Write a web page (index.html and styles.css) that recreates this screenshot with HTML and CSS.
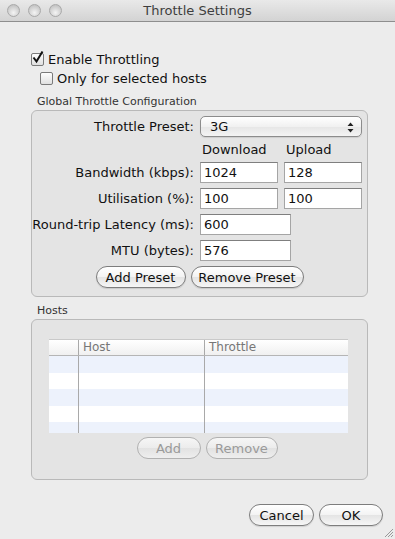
FILE: index.html
```html
<!DOCTYPE html>
<html>
<head>
<meta charset="utf-8">
<link rel="stylesheet" href="styles.css">
</head>
<body>
<div class="window">
  <div class="titlebar">
    <div class="lights"><span class="light"></span><span class="light"></span><span class="light"></span></div>
    <div class="title">Throttle Settings</div>
  </div>
  <div class="content">
    <label class="check check-main"><span class="box checked"><svg width="13" height="13" viewBox="0 0 13 13"><path d="M2.5 6.5 L5.5 10.5 L11.5 0.5" fill="none" stroke="#111" stroke-width="2"/></svg></span>Enable Throttling</label>
    <label class="check check-sub"><span class="box"></span>Only for selected hosts</label>

    <div class="group-title">Global Throttle Configuration</div>
    <div class="group group-config">
      <div class="row row-preset">
        <span class="lbl">Throttle Preset:</span>
        <div class="select"><span>3G</span><svg class="arrows" width="7" height="11" viewBox="0 0 7 11"><path d="M3.5 0.5 L6.5 4 L0.5 4 Z M3.5 10.5 L6.5 7 L0.5 7 Z" fill="#222"/></svg></div>
      </div>
      <div class="row row-head">
        <span class="lbl"></span>
        <span class="colhead">Download</span>
        <span class="colhead">Upload</span>
      </div>
      <div class="row">
        <span class="lbl">Bandwidth (kbps):</span>
        <div class="input">1024</div>
        <div class="input">128</div>
      </div>
      <div class="row">
        <span class="lbl">Utilisation (%):</span>
        <div class="input">100</div>
        <div class="input">100</div>
      </div>
      <div class="row">
        <span class="lbl">Round-trip Latency (ms):</span>
        <div class="input wide">600</div>
      </div>
      <div class="row">
        <span class="lbl">MTU (bytes):</span>
        <div class="input wide">576</div>
      </div>
      <div class="btnrow btnrow-preset">
        <button class="btn btn-addpreset">Add Preset</button>
        <button class="btn btn-rmpreset">Remove Preset</button>
      </div>
    </div>

    <div class="group-title hosts-title">Hosts</div>
    <div class="group group-hosts">
      <div class="table">
        <div class="trow thead"><span class="c0"></span><span class="c1">Host</span><span class="c2">Throttle</span></div>
        <div class="trow odd"><span class="c0"></span><span class="c1"></span><span class="c2"></span></div>
        <div class="trow"><span class="c0"></span><span class="c1"></span><span class="c2"></span></div>
        <div class="trow odd"><span class="c0"></span><span class="c1"></span><span class="c2"></span></div>
        <div class="trow"><span class="c0"></span><span class="c1"></span><span class="c2"></span></div>
        <div class="trow odd last"><span class="c0"></span><span class="c1"></span><span class="c2"></span></div>
      </div>
      <div class="btnrow btnrow-hosts">
        <button class="btn disabled btn-add">Add</button>
        <button class="btn disabled btn-remove">Remove</button>
      </div>
    </div>

    <div class="footer">
      <button class="btn btn-cancel">Cancel</button>
      <button class="btn btn-ok">OK</button>
    </div>
  </div>
  <svg class="grip" width="11" height="11" viewBox="0 0 11 11"><path d="M10 2 L2 10 M10 5 L5 10 M10 8 L8 10" stroke="#999" stroke-width="1"/></svg>
</div>
</body>
</html>
```

FILE: styles.css
```css
* { box-sizing: border-box; }
html, body { margin: 0; padding: 0; }
body {
  width: 395px;
  height: 539px;
  overflow: hidden;
  background: #ececec;
  font-family: "DejaVu Sans", "Liberation Sans", sans-serif;
  font-size: 12px;
  color: #111;
}
.window { position: relative; width: 395px; height: 539px; background: #ececec; }
.titlebar {
  height: 22px;
  background: linear-gradient(#e9e9e9, #d3d3d3);
  border-bottom: 1px solid #8e8e8e;
  display: flex;
  align-items: center;
  position: relative;
}
.lights { display: flex; gap: 8px; padding-left: 7px; }
.light {
  width: 13px; height: 13px; border-radius: 50%;
  border: 1px solid #a9a9a9;
  background: radial-gradient(circle at 50% 70%, #f4f4f4, #c9c9c9 70%, #b6b6b6);
}
.title {
  position: absolute; left: 0; right: 0; top: 0; bottom: 0;
  display: flex; align-items: center; justify-content: center;
  font-size: 13px; color: #3e3e3e;
}
.content { padding: 0 0 0 31px; }
.check { display: flex; align-items: center; gap: 4px; font-size: 13px; height: 16px; }
.check-main { margin-top: 29px; padding-left: 0; }
.check-sub { margin-top: 3px; padding-left: 9px; }
.box {
  width: 13px; height: 13px;
  border: 1px solid #7a7a7a;
  border-radius: 2px;
  background: linear-gradient(#fdfdfd, #e0e0e0);
  position: relative;
  flex: none;
}
.box svg { position: absolute; left: -1px; top: -3px; }
.group-title { font-size: 11px; color: #333; margin: 9px 0 0 6px; height: 13px; }
.group {
  width: 337px;
  border: 1px solid #b9b9b9;
  border-radius: 6px;
  background: #e4e4e4;
  margin-top: 2px;
}
.group-config { height: 187px; padding-top: 5px; }
.row { display: flex; align-items: center; gap: 6px; height: 21px; margin-bottom: 5px; }
.lbl { width: 162px; text-align: right; font-size: 13px; flex: none; }
.row-preset { height: 21px; margin-bottom: 4px; }
.row-head { height: 16px; margin-bottom: 5px; }
.colhead { width: 78px; font-size: 13px; padding-left: 2px; }
.select {
  width: 162px; height: 21px;
  border: 1px solid #8c8c8c;
  border-radius: 5px;
  background: linear-gradient(#ffffff, #f1f1f1 50%, #e6e6e6 51%, #f4f4f4);
  display: flex; align-items: center; justify-content: space-between;
  padding: 0 7px 0 9px;
  font-size: 13px;
  box-shadow: 0 1px 1px rgba(0,0,0,0.1);
}
.arrows { margin-top: 1px; }
.input {
  width: 78px; height: 21px;
  background: #fff;
  border: 1px solid #a5a5a5;
  border-top-color: #7f7f7f;
  font-size: 13px;
  padding: 2px 0 0 3px;
  line-height: 16px;
}
.input.wide { width: 91px; }
.btnrow { display: flex; justify-content: center; gap: 5px; }
.btnrow-preset { padding-left: 0; margin-top: 1px; }
.btn {
  font-family: "DejaVu Sans", "Liberation Sans", sans-serif;
  font-size: 13px;
  height: 22px;
  border: 1px solid #7d7d7d;
  border-radius: 11px;
  background: linear-gradient(#ffffff, #f3f3f3 50%, #e4e4e4 51%, #f6f6f6);
  color: #111;
  padding: 0;
  box-shadow: 0 1px 1px rgba(0,0,0,0.12);
}
.btn-addpreset { width: 90px; }
.btn-rmpreset { width: 113px; }
.btn.disabled { color: #9a9a9a; border-color: #b1b1b1; background: linear-gradient(#f6f6f6, #ececec 50%, #e2e2e2 51%, #eeeeee); box-shadow: none; }
.btn-add { width: 64px; }
.btn-remove { width: 72px; }
.hosts-title { margin-top: 7px; }
.group-hosts { height: 161px; padding: 19px 0 0 17px; }
.table { width: 299px; height: 94px; border-top: 1px solid #c9c9c9; background: #fff; overflow: hidden; }
.trow { display: flex; height: 16.5px; }
.trow.odd { background: #edf2fc; }
.trow span { display: block; flex: none; }
.c0 { width: 29px; }
.c1 { width: 126px; border-left: 1px solid #a9a9a9; }
.c2 { flex: 1 !important; border-left: 1px solid #a9a9a9; }
.thead { height: 16px; background: linear-gradient(#ffffff, #f0f0f0); border-bottom: 1px solid #b5b5b5; color: #777; font-size: 12px; }
.thead span { padding-left: 4px; line-height: 15px; }
.thead .c0 { border: none; }
.btnrow-hosts { margin-top: 4px; padding-right: 2px; }
.footer { display: flex; justify-content: flex-end; gap: 5px; margin-top: 24px; padding-right: 12px; }
.btn-cancel { width: 65px; }
.btn-ok { width: 64px; }
.grip { position: absolute; right: 1px; bottom: 1px; }
```
